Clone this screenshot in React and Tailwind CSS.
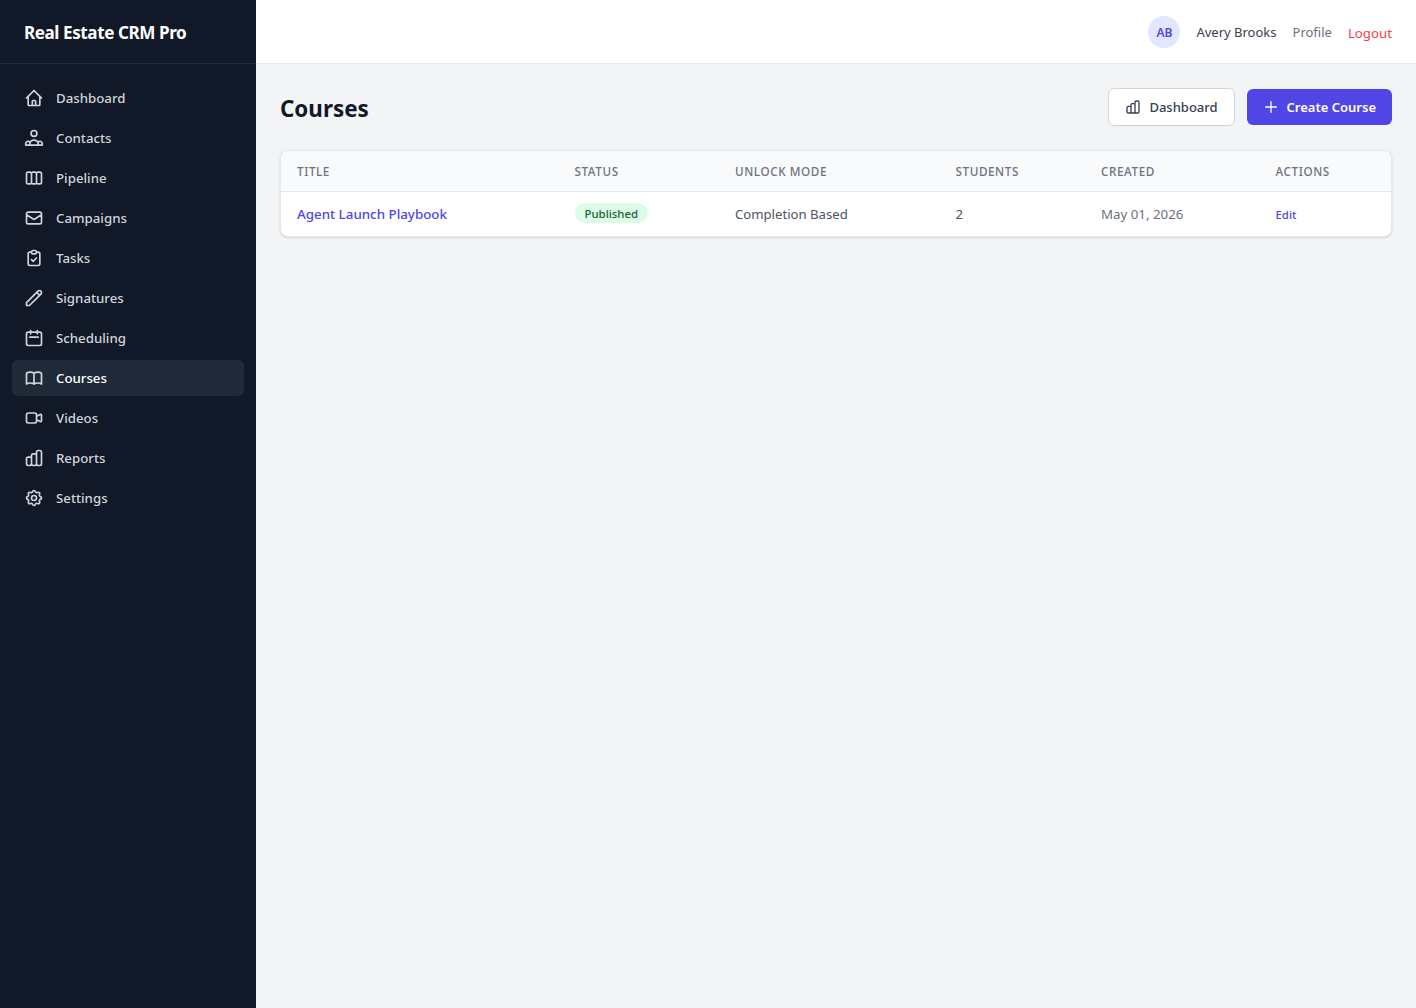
import {
  HiOutlineHome,
  HiOutlineViewBoards,
  HiOutlineMail,
  HiOutlineClipboardCheck,
  HiOutlinePencil,
  HiOutlineCalendar,
  HiOutlineBookOpen,
  HiOutlineVideoCamera,
  HiOutlineChartBar,
  HiOutlineCog,
  HiOutlinePlus,
} from 'react-icons/hi';

function ContactsIcon({ className }) {
  return (
    <svg className={className} viewBox="0 0 24 24" fill="none" stroke="currentColor" strokeWidth="2" strokeLinecap="round" strokeLinejoin="round">
      <circle cx="12" cy="6.5" r="3.5" />
      <path d="M7 20.5v-1.5a5 4.5 0 0 1 10 0v1.5z" />
      <path d="M7 20.5H2v-1.5a3 3 0 0 1 5-2.2M17 20.5h5v-1.5a3 3 0 0 0-5-2.2" />
    </svg>
  );
}

const navItems = [
  { label: 'Dashboard', icon: HiOutlineHome },
  { label: 'Contacts', icon: ContactsIcon },
  { label: 'Pipeline', icon: HiOutlineViewBoards },
  { label: 'Campaigns', icon: HiOutlineMail },
  { label: 'Tasks', icon: HiOutlineClipboardCheck },
  { label: 'Signatures', icon: HiOutlinePencil },
  { label: 'Scheduling', icon: HiOutlineCalendar },
  { label: 'Courses', icon: HiOutlineBookOpen, active: true },
  { label: 'Videos', icon: HiOutlineVideoCamera },
  { label: 'Reports', icon: HiOutlineChartBar },
  { label: 'Settings', icon: HiOutlineCog },
];

const thClass = 'px-4 pt-0.5 h-10 text-left text-[11.7px] font-medium tracking-wider uppercase text-[#6b7280]';

export default function App() {
  return (
    <div className="flex min-h-screen bg-[#f3f4f6] font-['Noto_Sans','Open_Sans',sans-serif]">
      <aside className="w-64 shrink-0 bg-[#111827]">
        <div className="h-16 flex items-center px-6 border-b border-[#1f2937]">
          <span className="text-[17.1px] font-bold text-white tracking-tight pt-0.5">Real Estate CRM Pro</span>
        </div>
        <nav className="px-3 py-4 flex flex-col gap-1">
          {navItems.map(item => {
            const Icon = item.icon;
            return (
              <a
                key={item.label}
                href="#"
                className={
                  'flex items-center gap-3 h-9 px-3 rounded-md text-[13.25px] font-medium ' +
                  (item.active ? 'bg-[#1f2937] text-white' : 'text-[#d1d5db]')
                }
              >
                <Icon className="w-5 h-5 shrink-0 text-[#d1d5db]" />
                <span className="pt-0.5">{item.label}</span>
              </a>
            );
          })}
        </nav>
      </aside>

      <div className="flex-1 min-w-0">
        <header className="h-16 bg-white border-b border-[#e5e7eb] flex items-center justify-end px-6 gap-4 text-[13px]">
          <div className="w-8 h-8 rounded-full bg-[#e0e7ff] text-[#4f46e5] flex items-center justify-center text-xs font-semibold pt-0.5">AB</div>
          <span className="text-[#374151] pt-0.5">Avery Brooks</span>
          <a href="#" className="text-[#6b7280] pt-0.5">Profile</a>
          <button className="text-[#ef4444] text-[13.25px] pt-1">Logout</button>
        </header>

        <main className="p-6">
          <div className="flex items-center justify-between mb-6">
            <h1 className="text-[22.4px] font-bold text-[#111827] pt-1">Courses</h1>
            <div className="flex items-center gap-3">
              <button className="flex items-center gap-2 h-[38px] px-4 bg-white border border-[#d1d5db] rounded-md text-[13px] font-medium text-[#374151]">
                <HiOutlineChartBar className="w-4 h-4" />
                <span className="pt-0.5">Dashboard</span>
              </button>
              <button className="flex items-center gap-2 h-9 px-4 bg-[#4f46e5] rounded-md text-[13px] font-semibold text-white">
                <HiOutlinePlus className="w-4 h-4" />
                <span className="pt-0.5">Create Course</span>
              </button>
            </div>
          </div>

          <div className="bg-white rounded-lg shadow-sm border border-[#e5e7eb] overflow-hidden">
            <table className="w-full">
              <thead className="bg-[#f9fafb] border-b border-[#e5e7eb]">
                <tr>
                  <th className={thClass + ' w-[277.5px]'}>Title</th>
                  <th className={thClass + ' w-[160.5px]'}>Status</th>
                  <th className={thClass + ' w-[220.5px]'}>Unlock Mode</th>
                  <th className={thClass + ' w-[145.5px]'}>Students</th>
                  <th className={thClass + ' w-[174.5px]'}>Created</th>
                  <th className={thClass}>Actions</th>
                </tr>
              </thead>
              <tbody>
                <tr className="h-[45px] text-[13.15px]">
                  <td className="px-4 text-[13.35px] font-medium text-[#4f46e5]">Agent Launch Playbook</td>
                  <td className="px-4">
                    <span className="inline-flex items-center h-5 px-2.5 pt-px rounded-full bg-[#dcfce7] text-[#166534] text-[11.4px] font-medium">Published</span>
                  </td>
                  <td className="px-4 pt-0.5 text-[#4b5563]">Completion Based</td>
                  <td className="px-4 pt-0.5 text-[#4b5563]">2</td>
                  <td className="px-4 pt-0.5 text-[13.3px] text-[#6b7280]">May 01, 2026</td>
                  <td className="px-4 pt-0.5 text-[11.4px] font-medium text-[#4f46e5]">Edit</td>
                </tr>
              </tbody>
            </table>
          </div>
        </main>
      </div>
    </div>
  );
}
